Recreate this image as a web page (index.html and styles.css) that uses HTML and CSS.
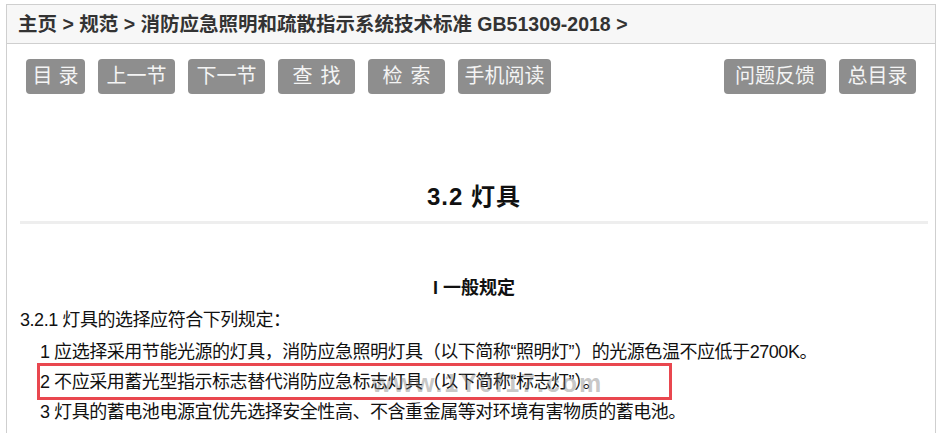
FILE: index.html
```html
<!DOCTYPE html>
<html lang="zh-CN">
<head>
    <meta charset="UTF-8">
    <meta name="viewport" content="width=device-width, initial-scale=1.0">
    <title>3.2 灯具 - 消防应急照明和疏散指示系统技术标准</title>
    <link rel="stylesheet" href="styles.css">
</head>
<body>
    <div class="page">
        <div class="crumbs">主页 &gt; 规范 &gt; 消防应急照明和疏散指示系统技术标准 GB51309-2018 &gt;</div>

        <div class="toolbar">
            <div class="toolbar-left">
                <a class="btn btn-two" href="#">目录</a>
                <a class="btn btn-three" href="#">上一节</a>
                <a class="btn btn-three" href="#">下一节</a>
                <a class="btn btn-two btn-spaced" href="#">查找</a>
                <a class="btn btn-two btn-spaced" href="#">检索</a>
                <a class="btn btn-four" href="#">手机阅读</a>
            </div>
            <div class="toolbar-right">
                <a class="btn btn-four btn-wide" href="#">问题反馈</a>
                <a class="btn btn-three" href="#">总目录</a>
            </div>
        </div>

        <div class="content">
            <h1 class="section-title">3.2 灯具</h1>
            <hr class="divider">

            <h3 class="sub-title">I 一般规定</h3>
            <p class="clause">3.2.1 灯具的选择应符合下列规定：</p>
            <p class="item">1 应选择采用节能光源的灯具，消防应急照明灯具（以下简称“照明灯”）的光源色温不应低于2700K。</p>
            <p class="item item-marked">2 不应采用蓄光型指示标志替代消防应急标志灯具（以下简称“标志灯”）。<span class="watermark">www.1Y0f17.com</span></p>
            <p class="item">3 灯具的蓄电池电源宜优先选择安全性高、不含重金属等对环境有害物质的蓄电池。</p>
        </div>
    </div>
</body>
</html>
```

FILE: styles.css
```css
body {
    margin: 0;
    font-family: "Liberation Sans", "Noto Sans CJK SC", sans-serif;
    color: #111;
    background: #fff;
}
.page {
    margin: 4px 11px 0 6px;
    border: 1px solid #cfcfcf;
    border-bottom: none;
    height: 440px;
    overflow: hidden;
}
.crumbs {
    height: 38px;
    line-height: 38px;
    padding-left: 11px;
    background-color: #f7f7f7;
    border-bottom: 1px solid #cfcfcf;
    font-size: 19.5px;
    font-weight: bold;
    color: #333;
}
.toolbar {
    display: flex;
    justify-content: space-between;
    padding: 15px 19px 0 19px;
}
.toolbar-left,
.toolbar-right {
    display: flex;
    gap: 13px;
}
.btn {
    display: block;
    height: 35px;
    line-height: 35px;
    background-color: #8e8e8e;
    color: #f4f4f4;
    border-radius: 4px;
    font-size: 20px;
    text-align: center;
    text-decoration: none;
}
.btn-two {
    width: 59px;
    letter-spacing: 6px;
    text-indent: 6px;
}
.btn-spaced {
    width: 77px;
    letter-spacing: 8px;
    text-indent: 8px;
}
.btn-three {
    width: 77px;
}
.btn-four {
    width: 93px;
}
.btn-wide {
    width: 102px;
}
.content {
    padding: 0 7px 0 13px;
}
.section-title {
    margin: 83px 0 0 0;
    height: 40px;
    line-height: 40px;
    text-align: center;
    font-size: 24px;
    letter-spacing: 1px;
    color: #111;
}
.divider {
    margin: 4px 0 0 0;
    height: 3px;
    border: none;
    background-color: #eee;
}
.sub-title {
    margin: 49px 0 0 0;
    line-height: 30px;
    text-align: center;
    font-size: 18px;
    color: #111;
}
.clause,
.item {
    margin: 0;
    line-height: 30px;
    font-size: 18px;
    letter-spacing: -0.45px;
}
.clause {
    margin-top: 2px;
    margin-bottom: 2px;
}
.item {
    padding-left: 20px;
}
.item-marked {
    position: relative;
}
.item-marked::after {
    content: "";
    position: absolute;
    left: 17px;
    top: -4px;
    width: 635px;
    height: 37px;
    border: 3px solid #e9474f;
    box-sizing: border-box;
}
.watermark {
    position: absolute;
    left: 352px;
    top: 1px;
    font-size: 25px;
    font-weight: bold;
    letter-spacing: 2px;
    color: rgba(110, 110, 110, 0.4);
}
```
